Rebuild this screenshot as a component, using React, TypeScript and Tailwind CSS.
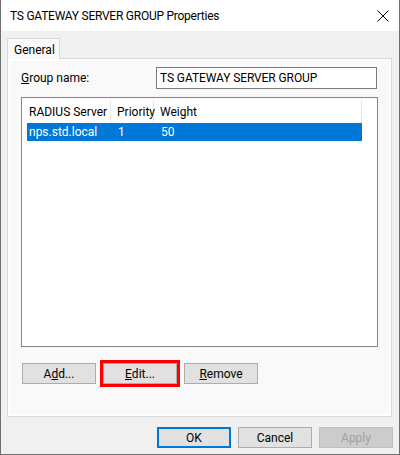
import React from "react";

const font = { fontFamily: 'Roboto, "Liberation Sans", Arial, sans-serif' };

function Btn({
  children,
  variant = "normal",
}: {
  children: React.ReactNode;
  variant?: "normal" | "default" | "disabled";
}) {
  const v =
    variant === "default"
      ? "border-2 border-[#0078d7] bg-[#e1e1e1] text-black"
      : variant === "disabled"
      ? "border border-[#bfbfbf] bg-[#cccccc] text-[#a0a0a0]"
      : "border border-[#adadad] bg-[#e1e1e1] text-black";
  return (
    <div className={"w-[74px] h-[21px] flex items-center justify-center text-[12px] leading-none whitespace-nowrap " + v}>
      {children}
    </div>
  );
}

export default function App() {
  return (
    <div
      className="w-[400px] h-[455px] bg-[#f0f0f0] border-x border-b border-[#707070] flex flex-col text-[12px] text-black"
      style={font}
    >
      {/* Title bar */}
      <div className="h-[31px] bg-white flex items-center justify-between pl-[9px] pr-[10px] shrink-0">
        <span className="text-[12px] tracking-[-0.25px]">TS GATEWAY SERVER GROUP Properties</span>
        <svg width="12" height="12" viewBox="0 0 12 12">
          <path d="M0.5 0.5 L11.5 11.5 M11.5 0.5 L0.5 11.5" stroke="#000" strokeWidth="1" fill="none" />
        </svg>
      </div>

      {/* Body */}
      <div className="flex flex-col pl-[6px] pt-[7px]">
        {/* Tab strip */}
        <div className="flex h-[21px] relative z-10">
          <div className="w-[53px] h-[21px] border border-b-0 border-[#d9d9d9] bg-[#f9f9f9] flex items-center pl-[6px] pt-[1px]">
            General
          </div>
        </div>
        {/* Panel */}
        <div className="w-[385px] h-[359px] border border-[#d9d9d9] bg-white p-[2px] -mt-[1px]">
          <div className="w-full h-full bg-[#f9f9f9] flex flex-col pl-[11px] pt-[6px]">
            <div className="flex items-center h-[22px]">
              <span className="w-[135px] whitespace-nowrap">
                <span className="underline">G</span>roup name:
              </span>
              <div className="w-[221px] h-[22px] border border-[#7a7a7a] bg-white flex items-center pl-[3px] whitespace-nowrap tracking-[-0.1px]">
                TS GATEWAY SERVER GROUP
              </div>
            </div>

            {/* List view */}
            <div className="mt-[8px] w-[357px] h-[250px] border border-[#828790] bg-white pl-[5px] pt-[2px]">
              <div className="flex h-[23px] w-[335px] whitespace-nowrap">
                <div className="w-[84px] border-r border-[#e5e5e5] flex items-center pl-[2px]">RADIUS Server</div>
                <div className="w-[43px] border-r border-[#e5e5e5] flex items-center pl-[6px]">Priority</div>
                <div className="w-[208px] border-r border-[#e5e5e5] flex items-center pl-[6px]">Weight</div>
              </div>
              <div className="flex h-[18px] w-[335px] bg-[#0078d7] text-white whitespace-nowrap">
                <div className="w-[84px] flex items-center pl-[2px]">nps.std.local</div>
                <div className="w-[43px] flex items-center pl-[7px]">1</div>
                <div className="w-[208px] flex items-center pl-[7px]">50</div>
              </div>
            </div>

            {/* Buttons */}
            <div className="mt-[16px] flex gap-[7px] pl-[1px]">
              <Btn>
                A<span className="underline">d</span>d...
              </Btn>
              <div className="relative">
                <Btn>
                  <span className="underline">E</span>dit...
                </Btn>
                <div className="absolute -left-[3px] -top-[3px] w-[80px] h-[27px] border-[3px] border-[#ff0000]" />
              </div>
              <Btn>
                <span className="underline">R</span>emove
              </Btn>
            </div>
          </div>
        </div>

        {/* Bottom buttons */}
        <div className="flex gap-[7px] mt-[10px] pl-[150px]">
          <Btn variant="default">OK</Btn>
          <Btn>Cancel</Btn>
          <Btn variant="disabled">Apply</Btn>
        </div>
      </div>
    </div>
  );
}
